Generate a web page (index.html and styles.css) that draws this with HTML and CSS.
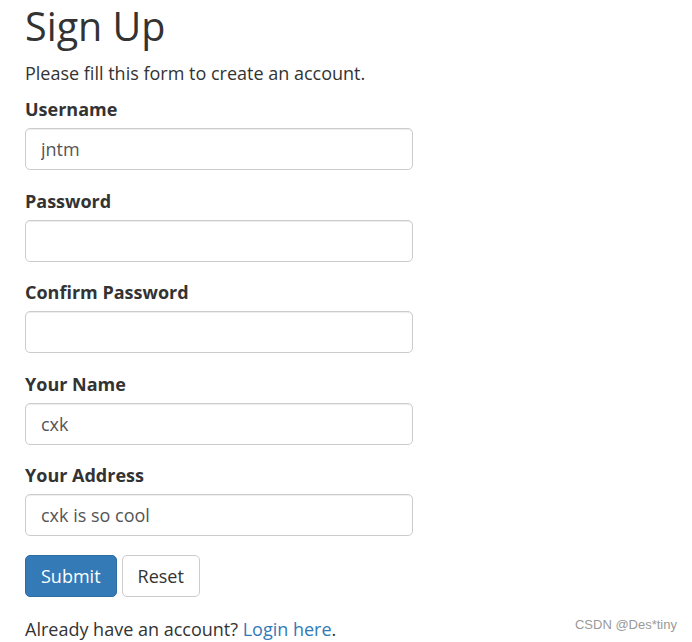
FILE: index.html
```html
<!DOCTYPE html>
<html lang="en">
<head>
<meta charset="utf-8">
<title>Sign Up</title>
<link rel="stylesheet" href="styles.css">
</head>
<body>
<div class="wrapper">
  <h1 class="title">Sign Up</h1>
  <p class="intro">Please fill this form to create an account.</p>
  <form class="form">
    <div class="form-group">
      <label class="label">Username</label>
      <input class="input" type="text" value="jntm">
    </div>
    <div class="form-group">
      <label class="label">Password</label>
      <input class="input" type="password" value="">
    </div>
    <div class="form-group">
      <label class="label">Confirm Password</label>
      <input class="input" type="password" value="">
    </div>
    <div class="form-group">
      <label class="label">Your Name</label>
      <input class="input" type="text" value="cxk">
    </div>
    <div class="form-group">
      <label class="label">Your Address</label>
      <input class="input" type="text" value="cxk is so cool">
    </div>
    <div class="actions">
      <button class="btn btn-primary" type="button">Submit</button>
      <button class="btn btn-default" type="button">Reset</button>
    </div>
    <p class="footer-text">Already have an account? <a class="link" href="#">Login here</a>.</p>
  </form>
</div>
<div class="watermark">CSDN @Des*tiny</div>
</body>
</html>
```

FILE: styles.css
```css
* { box-sizing: border-box; }
html, body {
  margin: 0;
  padding: 0;
  background: #fff;
}
body {
  font-family: "Open Sans", "Noto Sans", sans-serif;
  font-size: 18px;
  line-height: 25px;
  color: #333;
  position: relative;
  height: 642px;
  overflow: hidden;
}
.wrapper {
  width: 438px;
  padding: 0 25px;
}
.title {
  font-size: 39.5px;
  font-weight: 400;
  line-height: 45px;
  margin: 4px 0 12px 0;
}
.intro {
  margin: 0 0 11px 0;
}
.form { margin: 0; }
.form-group {
  margin-bottom: 18.5px;
}
.label {
  display: block;
  font-weight: 700;
  margin-bottom: 6px;
}
.input {
  display: block;
  width: 100%;
  height: 42px;
  padding: 6px 15px;
  font-family: inherit;
  font-size: 18px;
  color: #555;
  background: #fff;
  border: 1px solid #ccc;
  border-radius: 5px;
  box-shadow: inset 0 1px 1px rgba(0,0,0,0.075);
  outline: none;
}
.actions {
  display: flex;
  gap: 5px;
  margin-bottom: 20px;
}
.btn {
  height: 42px;
  padding: 0 15px;
  font-family: inherit;
  font-size: 18px;
  border-radius: 5px;
  border: 1px solid transparent;
  cursor: pointer;
}
.btn-primary {
  background: #337ab7;
  border-color: #2e6da4;
  color: #fff;
}
.btn-default {
  background: #fff;
  border-color: #ccc;
  color: #333;
}
.footer-text {
  margin: 0;
}
.link {
  color: #337ab7;
  text-decoration: none;
}
.watermark {
  position: absolute;
  right: 15px;
  bottom: 10px;
  font-family: "Liberation Sans", Arial, sans-serif;
  font-size: 13px;
  line-height: 14px;
  color: #999;
}
```
